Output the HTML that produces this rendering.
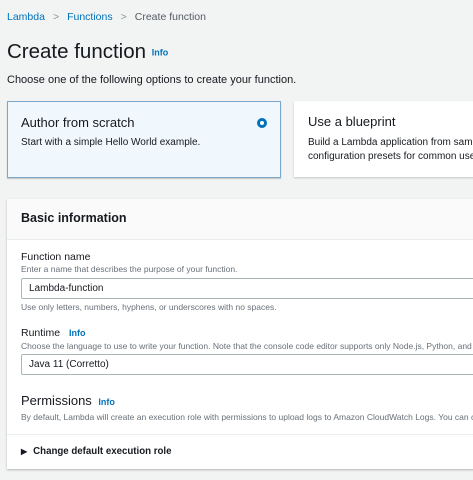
<!DOCTYPE html><html><head><style>
body{margin:0;width:473px;height:480px;background:#f2f3f3;font-family:"Liberation Sans",sans-serif;position:relative;overflow:hidden;color:#16191f}
.a{position:absolute;white-space:nowrap}
.l{color:#0073bb}
.info{color:#0073bb;font-weight:bold;font-size:9px}
</style></head><body>
<div class="a" style="left:7px;top:11px;font-size:10.5px"><span class="l">Lambda</span><span style="color:#879596;margin:0 8px">&gt;</span><span class="l">Functions</span><span style="color:#879596;margin:0 8px">&gt;</span><span style="color:#545b64">Create function</span></div>
<div class="a" style="left:7px;top:40px;font-size:20.5px">Create function <span class="info" style="font-size:9px;vertical-align:middle">Info</span></div>
<div class="a" style="left:7px;top:74px;font-size:11px">Choose one of the following options to create your function.</div>
<div class="a" style="left:7px;top:101px;width:272px;height:75px;background:#f1f8fd;border:1px solid #7fa7c9;box-shadow:0 1px 1px rgba(0,0,0,.2)">
<div class="a" style="left:13px;top:13px;font-size:13px">Author from scratch</div>
<div class="a" style="left:13px;top:35px;font-size:10px">Start with a simple Hello World example.</div>
<div class="a" style="left:249px;top:16px;width:4px;height:4px;border:3px solid #0073bb;border-radius:50%;background:#fff"></div>
</div>
<div class="a" style="left:294px;top:101px;width:190px;height:76px;background:#fff;box-shadow:0 1px 2px rgba(0,0,0,.2)">
<div class="a" style="left:14px;top:13px;font-size:13px">Use a blueprint</div>
<div class="a" style="left:14px;top:35px;font-size:10px;line-height:14px">Build a Lambda application from sample<br>configuration presets for common use</div>
</div>
<div class="a" style="left:7px;top:199px;width:480px;height:270px;background:#fff;box-shadow:0 1px 2px rgba(0,0,0,.25)">
<div class="a" style="left:0;top:0;width:100%;height:40px;background:#fafafa;border-bottom:1px solid #eaeded"></div>
<div class="a" style="left:14px;top:12px;font-size:12.5px;font-weight:bold">Basic information</div>
<div class="a" style="left:14px;top:52px;font-size:10.5px">Function name</div>
<div class="a" style="left:14px;top:65px;font-size:8.5px;color:#687078">Enter a name that describes the purpose of your function.</div>
<div class="a" style="left:14px;top:79px;width:470px;height:19px;border:1px solid #aab7b8;border-radius:2px"></div>
<div class="a" style="left:22px;top:84px;font-size:10px">Lambda-function</div>
<div class="a" style="left:14px;top:103px;font-size:8.5px;color:#687078">Use only letters, numbers, hyphens, or underscores with no spaces.</div>
<div class="a" style="left:14px;top:128px;font-size:10.5px">Runtime <span class="info" style="margin-left:6px">Info</span></div>
<div class="a" style="left:14px;top:142px;font-size:8.5px;color:#687078">Choose the language to use to write your function. Note that the console code editor supports only Node.js, Python, and</div>
<div class="a" style="left:14px;top:155px;width:470px;height:19px;border:1px solid #aab7b8;border-radius:2px"></div>
<div class="a" style="left:22px;top:160px;font-size:10px">Java 11 (Corretto)</div>
<div class="a" style="left:14px;top:194px;font-size:13px">Permissions <span class="info" style="margin-left:3px">Info</span></div>
<div class="a" style="left:14px;top:213px;font-size:8.5px;color:#687078">By default, Lambda will create an execution role with permissions to upload logs to Amazon CloudWatch Logs. You can c</div>
<div class="a" style="left:0;top:235px;width:100%;height:1px;background:#eaeded"></div>
<div class="a" style="left:14px;top:247px;font-size:9.7px;font-weight:bold"><span style="font-size:8px;margin-right:6px">&#9654;</span>Change default execution role</div>
</div>
</body></html>
